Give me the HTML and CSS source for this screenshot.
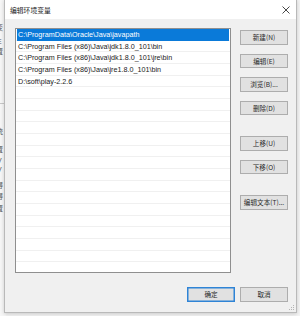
FILE: index.html
```html
<!DOCTYPE html>
<html lang="zh-CN">
<head>
<meta charset="utf-8">
<title>编辑环境变量</title>
<link rel="stylesheet" href="styles.css">
</head>
<body>
<div class="backdrop">
  <span class="bg-glyph g1">变</span>
  <span class="bg-glyph g2">E</span>
  <span class="bg-glyph g3">置</span>
  <div class="bg-line"></div>
  <span class="bg-glyph g4">统</span>
  <span class="bg-glyph g5">置</span>
  <span class="bg-glyph g6">V</span>
  <span class="bg-glyph g7">V</span>
  <span class="bg-glyph g8">得</span>
  <span class="bg-glyph g9">得</span>
  <span class="bg-glyph g10">置</span>
</div>
<div class="dialog">
  <div class="titlebar">
    <span class="title">编辑环境变量</span>
    <svg class="close" width="8" height="8" viewBox="0 0 8 8"><path d="M0.5 0.5 L7.5 7.5 M7.5 0.5 L0.5 7.5" stroke="#333" stroke-width="0.9" fill="none"/></svg>
  </div>
  <div class="body">
    <div class="main">
      <div class="list">
        <div class="row selected">C:\ProgramData\Oracle\Java\javapath</div>
        <div class="row">C:\Program Files (x86)\Java\jdk1.8.0_101\bin</div>
        <div class="row">C:\Program Files (x86)\Java\jdk1.8.0_101\jre\bin</div>
        <div class="row">C:\Program Files (x86)\Java\jre1.8.0_101\bin</div>
        <div class="row">D:\soft\play-2.2.6</div>
      </div>
      <div class="side">
        <button class="btn">新建(N)</button>
        <button class="btn">编辑(E)</button>
        <button class="btn">浏览(B)...</button>
        <button class="btn">删除(D)</button>
        <button class="btn gap">上移(U)</button>
        <button class="btn">下移(O)</button>
        <button class="btn gap">编辑文本(T)...</button>
      </div>
    </div>
    <div class="footer">
      <button class="btn default">确定</button>
      <button class="btn">取消</button>
    </div>
    <svg class="grip" width="6" height="6" viewBox="0 0 6 6">
      <rect x="4" y="0" width="1" height="1" fill="#b5b5b5"/>
      <rect x="2" y="2" width="1" height="1" fill="#b5b5b5"/>
      <rect x="4" y="2" width="1" height="1" fill="#b5b5b5"/>
      <rect x="0" y="4" width="1" height="1" fill="#b5b5b5"/>
      <rect x="2" y="4" width="1" height="1" fill="#b5b5b5"/>
      <rect x="4" y="4" width="1" height="1" fill="#b5b5b5"/>
    </svg>
  </div>
</div>
</body>
</html>
```

FILE: styles.css
```css
html, body {
  margin: 0;
  padding: 0;
}
body {
  width: 300px;
  height: 316px;
  background: #f4f4f4;
  position: relative;
  overflow: hidden;
  font-family: "Liberation Sans", "Noto Sans CJK SC", sans-serif;
}
.backdrop {
  position: absolute;
  left: 0;
  top: 0;
  width: 6px;
  height: 316px;
  background: #f7f7f7;
}
.bg-glyph {
  position: absolute;
  left: -4px;
  font-size: 7px;
  color: #555;
  line-height: 7px;
}
.g1 { top: 24px; }
.g2 { top: 38px; left: -3px; }
.g3 { top: 48px; }
.g4 { top: 128px; }
.g5 { top: 146px; }
.g6 { top: 157px; left: -3px; }
.g7 { top: 166px; left: -3px; }
.g8 { top: 182px; }
.g9 { top: 193px; }
.g10 { top: 205px; }
.bg-line {
  position: absolute;
  left: 0;
  top: 103px;
  width: 5px;
  height: 1px;
  background: #c8c8c8;
}
.dialog {
  position: absolute;
  left: 4px;
  top: -1px;
  width: 291px;
  height: 312px;
  border: 1px solid #b9b9b9;
  background: #f0f0f0;
  box-shadow: 0 1px 4px rgba(0,0,0,0.18);
  display: flex;
  flex-direction: column;
}
.titlebar {
  height: 19px;
  background: #fff;
  display: flex;
  align-items: center;
  justify-content: space-between;
  padding: 0 6px 0 5px;
  flex: none;
}
.title {
  font-family: "Noto Sans CJK SC", sans-serif;
  font-size: 6.8px;
  color: #1a1a1a;
}
.close {
  display: block;
  margin-top: 1px;
}
.body {
  flex: 1;
  position: relative;
  padding: 9px 8px 0 10px;
  display: flex;
  flex-direction: column;
}
.main {
  display: flex;
  gap: 9px;
}
.list {
  width: 214px;
  height: 243px;
  background-color: #fff;
  background-image: repeating-linear-gradient(to bottom, transparent 0, transparent 10.67px, #f0f0f0 10.67px, #f0f0f0 11.67px);
  background-position: 0 0;
  border: 1px solid #8f8f8f;
  padding: 0;
  flex: none;
}
.row {
  height: 11.67px;
  line-height: 11.67px;
  font-size: 7.2px;
  color: #1a1a1a;
  padding-left: 2px;
  white-space: nowrap;
}
.row.selected {
  background: #0a7ad9;
  color: #fff;
  margin: 0 1px;
  padding-left: 1px;
}
.side {
  display: flex;
  flex-direction: column;
  gap: 9px;
  padding-top: 2px;
}
.btn {
  width: 48px;
  height: 14.5px;
  margin: 0;
  padding: 0;
  background: #e1e1e1;
  border: 1px solid #adadad;
  font-family: "Noto Sans CJK SC", sans-serif;
  font-size: 6.6px;
  color: #2a2a2a;
  line-height: 12px;
  text-align: center;
  flex: none;
}
.btn.gap {
  margin-top: 12px;
}
.footer {
  display: flex;
  justify-content: flex-end;
  gap: 5px;
  margin-top: 14px;
}
.btn.default {
  border-color: #2f84d6;
  box-shadow: inset 0 0 0 0.5px #2f84d6;
}
.grip {
  position: absolute;
  right: 1px;
  bottom: 1px;
}
```
